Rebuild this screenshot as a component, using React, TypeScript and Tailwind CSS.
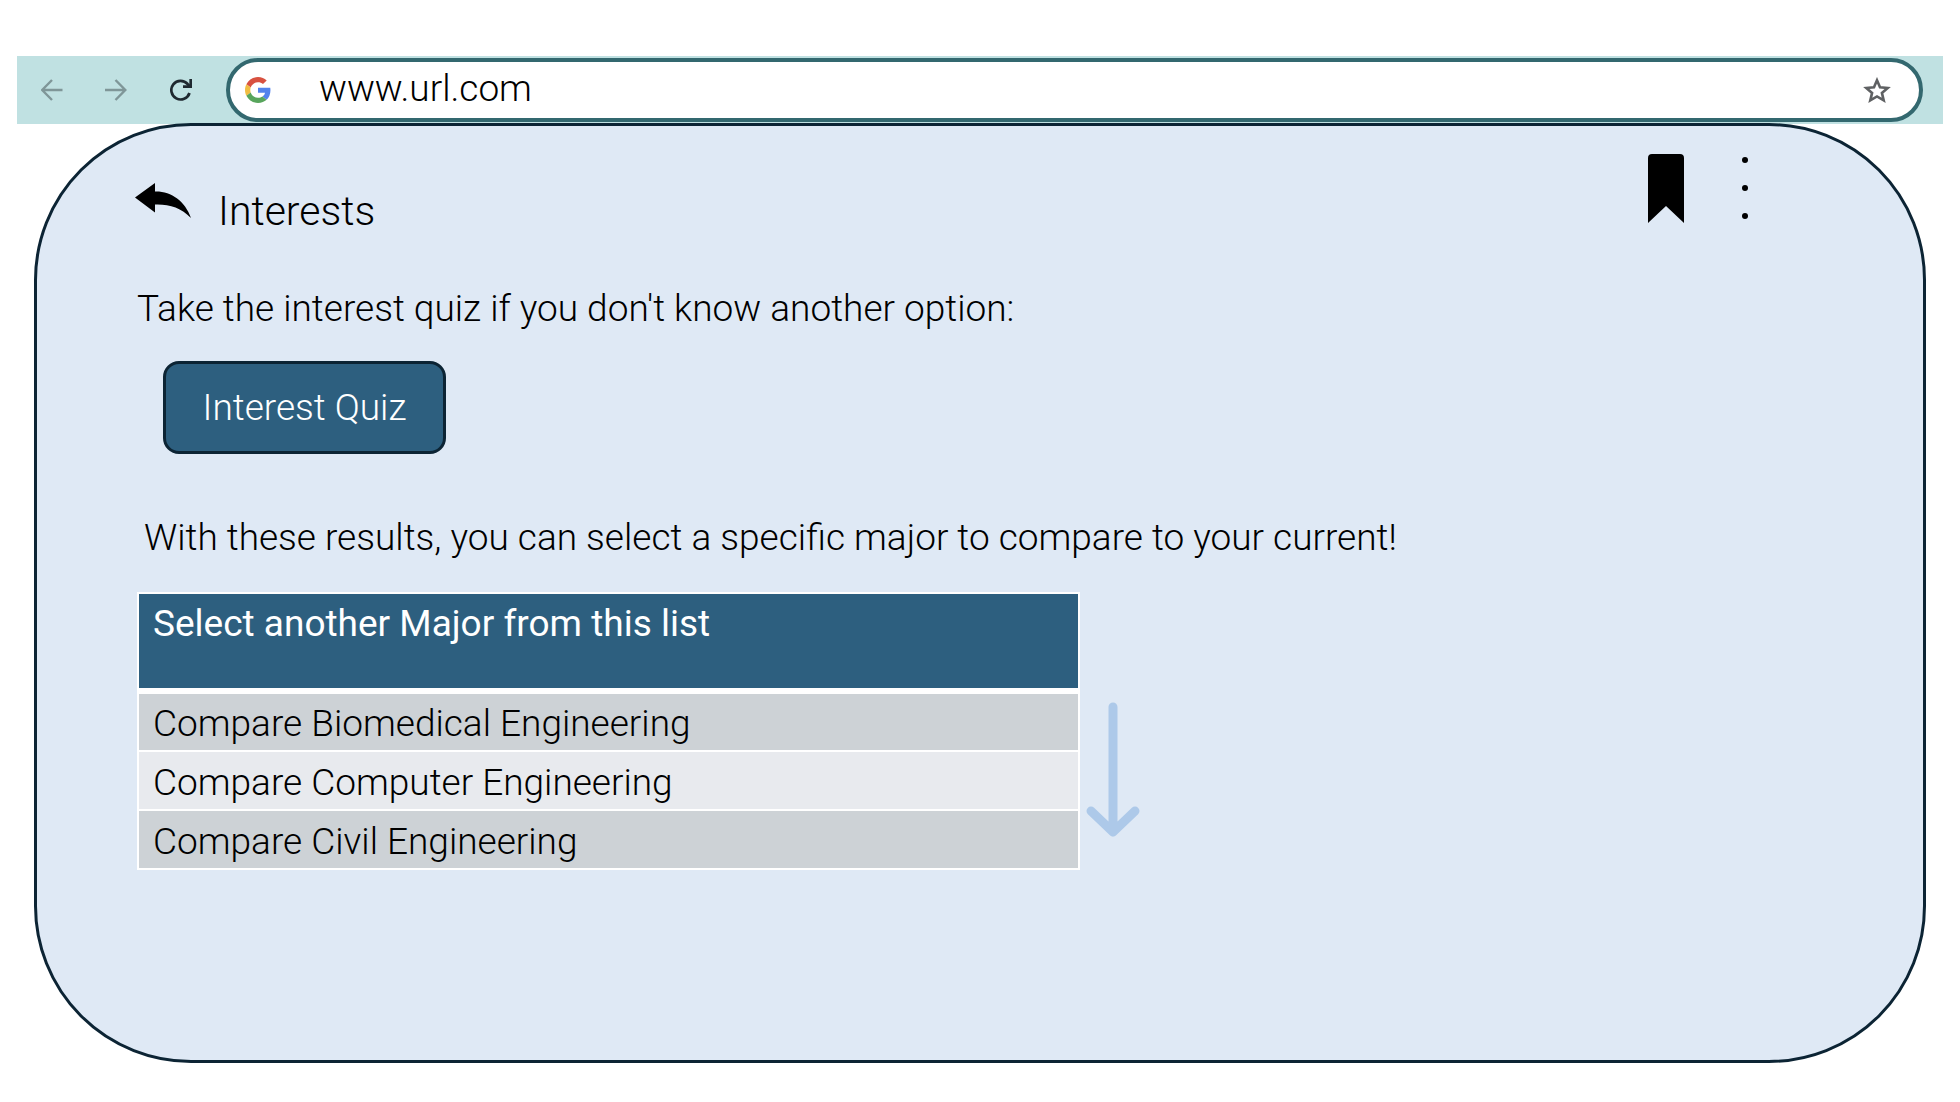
import { useState } from "react";

const majors = [
  "Compare Biomedical Engineering",
  "Compare Computer Engineering",
  "Compare Civil Engineering",
];

function GoogleLogo() {
  return (
    <svg viewBox="0 0 48 48" className="h-[26px] w-[26px] shrink-0" aria-hidden="true">
      <path fill="#d85140" d="M24 9.5c3.54 0 6.71 1.22 9.21 3.6l6.85-6.85C35.9 2.38 30.47 0 24 0 14.62 0 6.51 5.38 2.56 13.22l7.98 6.19C12.43 13.72 17.74 9.5 24 9.5z" />
      <path fill="#5383ec" d="M46.98 24.55c0-1.57-.15-3.09-.38-4.55H24v9.02h12.94c-.58 2.96-2.26 5.48-4.78 7.18l7.73 6c4.51-4.18 7.09-10.36 7.09-17.65z" />
      <path fill="#f1bd42" d="M10.53 28.59c-.48-1.45-.76-2.99-.76-4.59s.27-3.14.76-4.59l-7.98-6.19C.92 16.46 0 20.12 0 24c0 3.88.92 7.54 2.56 10.78l7.97-6.19z" />
      <path fill="#58a55c" d="M24 48c6.48 0 11.93-2.13 15.89-5.81l-7.73-6c-2.15 1.45-4.92 2.3-8.16 2.3-6.26 0-11.57-4.22-13.47-9.91l-7.98 6.19C6.51 42.62 14.62 48 24 48z" />
    </svg>
  );
}

function BrowserBar() {
  const [url, setUrl] = useState("www.url.com");
  return (
    <header className="mx-[17px] flex h-[68px] items-center bg-[#c0e1e2] pr-5 pl-6">
      <button type="button" aria-label="Back" className="shrink-0">
        <svg viewBox="0 0 22 22" className="h-[22px] w-[22px]" fill="none" stroke="#7f9698" strokeWidth="2.4">
          <path d="M21.500 11H1.500M11 1L1.200 11L11 21" />
        </svg>
      </button>
      <button type="button" aria-label="Forward" className="ml-[42px] shrink-0">
        <svg viewBox="0 0 22 22" className="h-[22px] w-[22px]" fill="none" stroke="#7f9698" strokeWidth="2.4">
          <path d="M0 11H20M10.500 1L20.300 11L10.500 21" />
        </svg>
      </button>
      <button type="button" aria-label="Reload" className="ml-[43px] shrink-0">
        <svg viewBox="0 0 22 22" className="h-[22px] w-[22px]" fill="none" stroke="#1f2930" strokeWidth="2.7">
          <path d="M19.500 14A9.300 9.300 0 1 1 17.600 5L20 7.500" />
          <path d="M20.700 0V7.700H13" />
        </svg>
      </button>
      <div className="ml-[34px] flex h-16 min-w-0 flex-1 items-center rounded-full border-4 border-[#33686f] bg-white pr-7 pl-[15px]">
        <GoogleLogo />
        <input
          aria-label="Address"
          value={url}
          onChange={(e) => setUrl(e.target.value)}
          className="ml-12 min-w-0 flex-1 bg-transparent pb-0.5 text-[37px] leading-[44px] font-light text-black outline-none"
        />
        <button type="button" aria-label="Bookmark this page" className="shrink-0">
          <svg viewBox="0 0 28 27" className="h-[27px] w-7" fill="none" stroke="#5f6163" strokeWidth="2.600">
            <path d="M14 3.200L17 10.200L24.700 10.900L18.900 15.900L20.700 23.400L14 19.400L7.300 23.400L9.100 15.900L3.300 10.900L11 10.200Z" />
          </svg>
        </button>
      </div>
    </header>
  );
}

export default function App() {
  return (
    <div className="min-h-screen bg-white pt-14 pb-10 font-['Roboto',sans-serif] font-light text-black">
      <BrowserBar />
      <main className="mr-[34px] ml-[34px] -mt-px min-h-[940px] rounded-[157px] border-3 border-[#0c2434] bg-[#dfe9f5] pr-[174px] pb-20 pl-[100px]">
        <div className="flex items-start pt-7">
          <button type="button" aria-label="Go back" className="mt-[29px] ml-[-2px] shrink-0">
            <svg viewBox="0 0 56 36" className="h-9 w-14">
              <path d="M0 14.500L20 0V8.500C36 8 50 18 56 35C46 24.500 34 21 20 21.500V29.500Z" />
            </svg>
          </button>
          <h1 className="mt-[31px] ml-[27px] text-[41px] leading-[52px]">Interests</h1>
          <button type="button" aria-label="Save" className="ml-auto shrink-0">
            <svg viewBox="0 0 36 69" className="h-[69px] w-9">
              <path d="M0 4Q0 0 4 0H32Q36 0 36 4V69L18 52L0 69Z" />
            </svg>
          </button>
          <button type="button" aria-label="More options" className="ml-[57px] shrink-0 pt-[3px]">
            <svg viewBox="0 0 8 62" className="h-[62px] w-2">
              <circle cx="4" cy="3" r="3" />
              <circle cx="4" cy="31" r="3" />
              <circle cx="4" cy="59" r="3" />
            </svg>
          </button>
        </div>

        <p className="mt-[46px] text-[37px] leading-[52px]">
          Take the interest quiz if you don't know another option:
        </p>
        <button
          type="button"
          className="mt-[26px] ml-[26px] h-[93px] w-[283px] rounded-2xl border-3 border-[#0c2434] bg-[#2d5f7f] text-[37px] leading-[52px] text-white"
        >
          Interest Quiz
        </button>
        <p className="mt-[58px] ml-[7px] text-[37px] leading-[52px]">
          With these results, you can select a specific major to compare to your current!
        </p>

        <div className="mt-7 flex items-start">
          <table className="w-full max-w-[943px] border-collapse border-2 border-white text-left text-[37px] leading-[52px]">
            <thead>
              <tr className="h-[98px] border-b-6 border-white bg-[#2d5f7f] align-top">
                <th scope="col" className="px-3.5 pt-1 font-normal text-white">
                  Select another Major from this list
                </th>
              </tr>
            </thead>
            <tbody>
              {majors.map((major) => (
                <tr key={major} className="h-[59px] border-b-2 border-white odd:bg-[#cdd2d6] even:bg-[#e8eaee]">
                  <td className="px-3.5 pt-1">
                    <button type="button" className="block w-full text-left">
                      {major}
                    </button>
                  </td>
                </tr>
              ))}
            </tbody>
          </table>
          <svg
            viewBox="0 0 54 136"
            className="mt-[110px] ml-1.5 h-[136px] w-[54px] shrink-0"
            fill="none"
            stroke="#adc9e9"
            strokeWidth="9"
            strokeLinecap="round"
            strokeLinejoin="round"
            aria-hidden="true"
          >
            <path d="M27 5V130M5 109L27 130L49 109" />
          </svg>
        </div>
      </main>
    </div>
  );
}
